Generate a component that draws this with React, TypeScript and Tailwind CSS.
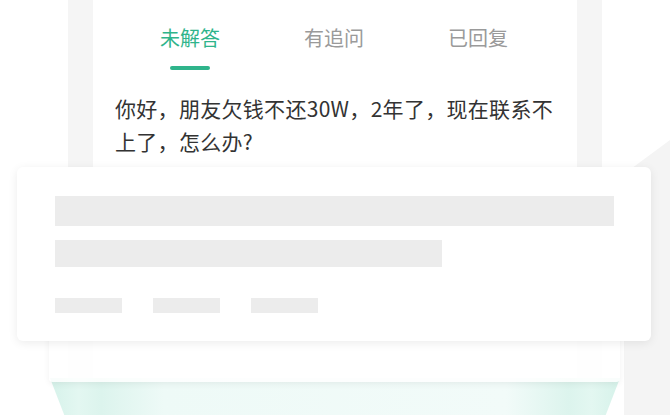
export default function App() {
  const tabs = ["未解答", "有追问", "已回复"];

  return (
    <div className="relative w-[670px] h-[415px] overflow-hidden bg-white font-['Noto_Sans_CJK_SC','Noto_Sans',sans-serif]">
      {/* right backdrop wedge */}
      <div className="absolute inset-0 bg-[#f4f4f4] [clip-path:polygon(624px_174px,670px_140px,670px_415px,624px_415px)]" />

      {/* phone */}
      <div className="relative ml-[68px] w-[534px] h-[415px] border-x-[25px] border-[#f5f5f5] bg-white">
        <div className="flex pl-[25px] pt-[24px]">
          {tabs.map((t, i) => (
            <div key={t} className="flex w-[144px] flex-col items-center">
              <span
                className={
                  i === 0
                    ? "text-[20px] leading-[28px] text-[#2fb48b]"
                    : "text-[20px] leading-[28px] text-[#9a9a9a]"
                }
              >
                {t}
              </span>
              {i === 0 && <div className="mt-[14px] h-[4px] w-[40px] rounded-full bg-[#2fb48b]" />}
            </div>
          ))}
        </div>
        <p className="mt-[22px] px-[22px] text-[21px] leading-[33px] tracking-[0.3px] text-[#333333]">
          你好，朋友欠钱不还30W，2年了，现在联系不上了，怎么办?
        </p>
      </div>

      {/* teal glass base */}
      <div className="absolute left-[50px] top-[378px] h-[37px] w-[570px] bg-[linear-gradient(to_right,#d6f2ea_0%,#e3f7f1_5%,#dcf4ed_9%,#eefaf7_20%,#f2fbf9_80%,#dcf4ed_91%,#e3f7f1_95%,#d6f2ea_100%)] [clip-path:polygon(0_0,100%_0,97.5%_100%,2.5%_100%)]" />

      {/* second stacked card */}
      <div className="absolute left-[49px] top-[300px] h-[82px] w-[571px] rounded-[4px] bg-white/85 shadow-[0_2px_6px_rgba(0,0,0,0.06)]" />

      {/* skeleton card */}
      <div className="absolute left-[17px] top-[167px] h-[174px] w-[634px] rounded-[6px] bg-white pl-[38px] pt-[29px] shadow-[0_2px_10px_rgba(0,0,0,0.08)]">
        <div className="h-[30px] w-[559px] bg-[#ececec]" />
        <div className="mt-[14px] h-[27px] w-[387px] bg-[#ececec]" />
        <div className="mt-[31px] flex gap-[31px]">
          <div className="h-[15px] w-[67px] bg-[#ececec]" />
          <div className="h-[15px] w-[67px] bg-[#ececec]" />
          <div className="h-[15px] w-[67px] bg-[#ececec]" />
        </div>
      </div>
    </div>
  );
}
